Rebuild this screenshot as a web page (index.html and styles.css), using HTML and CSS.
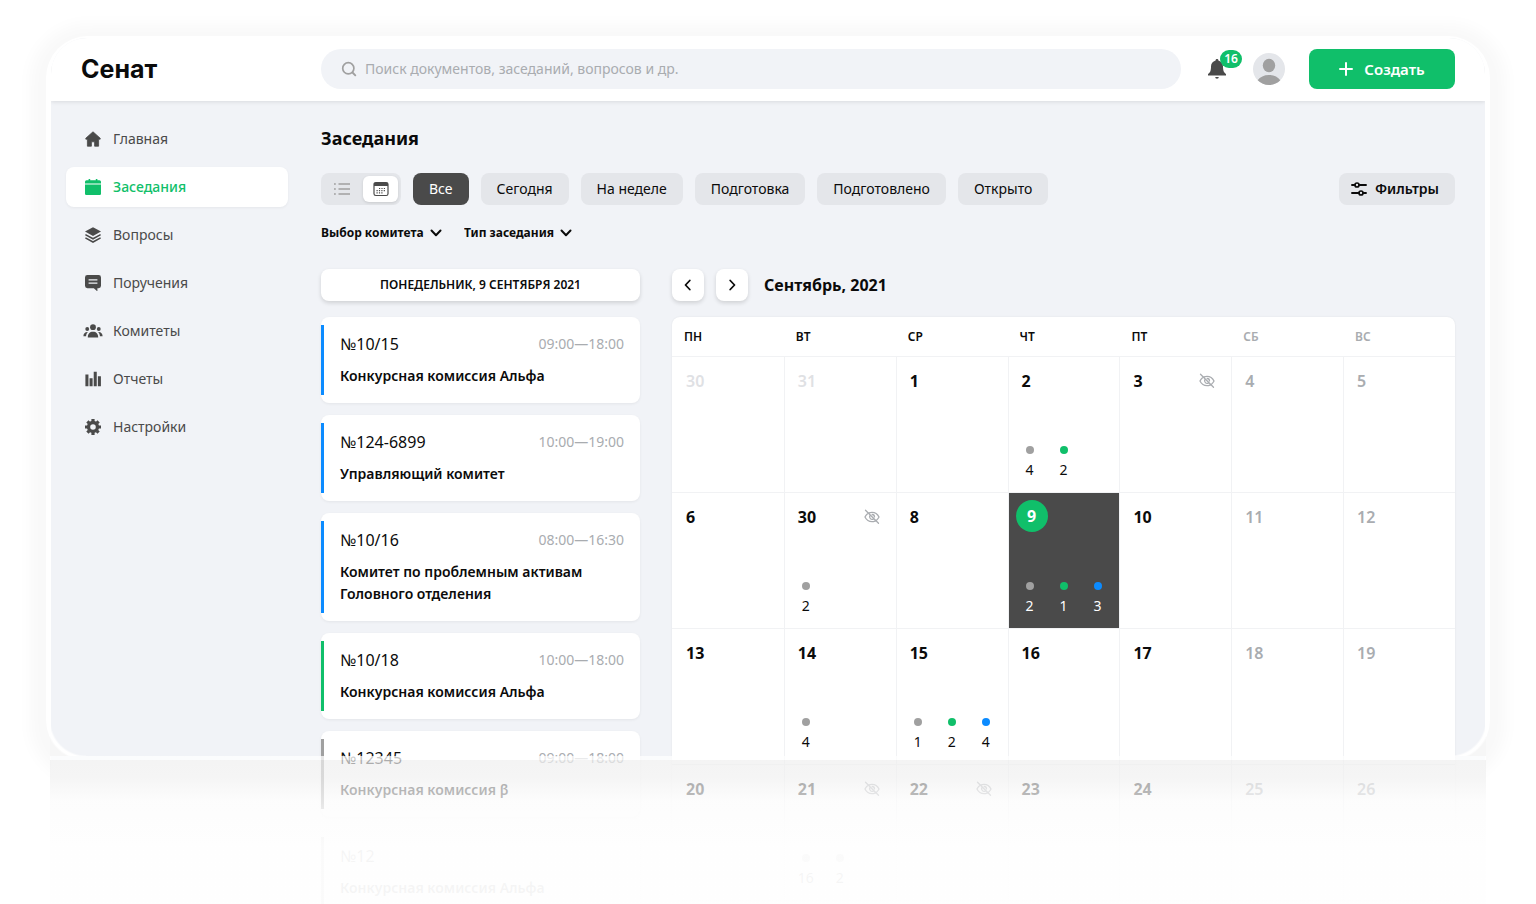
FILE: index.html
```
<!DOCTYPE html>
<html lang="ru">
<head>
<meta charset="utf-8">
<title>Сенат — Заседания</title>
<link rel="stylesheet" href="styles.css">
</head>
<body>
<svg class="sprite" aria-hidden="true">
  <symbol id="eye-off" viewBox="0 0 16 16">
    <path d="M5 3.900A8 8 0 0 1 8 3.300c3.300 0 5.700 2 7 4.700a9 9 0 0 1-2.100 2.800M3.300 4.900A9 9 0 0 0 1 8c1.300 2.700 3.700 4.700 7 4.700 1.100 0 2-.2 2.900-.6M5.900 6.500A2.600 2.600 0 0 0 9.500 10M8.200 5.500a2.500 2.500 0 0 1 2.300 2.400M1.500 1.300l13 13" fill="none" stroke="currentColor" stroke-width="1.300" stroke-linecap="round"/>
  </symbol>
  <symbol id="chevron" viewBox="0 0 12 12">
    <path d="M1.500 3.500 6 8.200l4.500-4.700" fill="none" stroke="currentColor" stroke-width="2" stroke-linecap="round" stroke-linejoin="round"/>
  </symbol>
</svg>
<div class="stage">
  <div class="halo"></div>
  <div class="app">
    <header class="header">
      <a class="logo" href="#">Сенат</a>
      <label class="search">
        <svg viewBox="0 0 16 16"><circle cx="7.300" cy="7.300" r="5.600" fill="none" stroke="currentColor" stroke-width="1.700"/><path d="m11.500 11.500 2.800 2.800" stroke="currentColor" stroke-width="1.900" stroke-linecap="round"/></svg>
        <input type="text" aria-label="Поиск" placeholder="Поиск документов, заседаний, вопросов и др.">
      </label>
      <button class="bell" aria-label="Уведомления">
        <svg viewBox="0 0 20 22"><path d="M10 1c.9 0 1.400.6 1.400 1.400C14.400 3.200 16 5.600 16 8.500c0 4.500 1 6 3 7.500v1.600H1V16c2-1.500 3-3 3-7.500 0-2.900 1.600-5.300 4.600-6.100C8.600 1.600 9.100 1 10 1zM8.200 19h3.600a1.800 1.800 0 0 1-3.600 0z" fill="currentColor"/></svg>
        <span class="badge">16</span>
      </button>
      <button class="avatar" aria-label="Профиль">
        <svg viewBox="0 0 32 32"><circle cx="16" cy="16" r="16" fill="#e4e6ea"/><ellipse cx="16" cy="12.500" rx="6.200" ry="6.800" fill="#a0a0a0"/><path d="M4.700 27.300C7 24 11 22 16 22s9 2 11.300 5.300a16 16 0 0 1-22.600 0z" fill="#a0a0a0"/></svg>
      </button>
      <button class="create">
        <svg viewBox="0 0 14 14"><path d="M7 1v12M1 7h12" stroke="currentColor" stroke-width="2" stroke-linecap="round"/></svg>
        Создать
      </button>
    </header>

    <div class="body">
      <nav class="nav">
        <a href="#"><svg viewBox="0 0 20 20"><path d="M10 1 19 9v1.200h-2V19h-5v-5.500H8V19H3v-8.800H1V9z" fill="currentColor" stroke="currentColor" stroke-linejoin="round"/></svg>Главная</a>
        <a href="#" class="active"><svg viewBox="0 0 20 20"><path d="M4.500 0h2v1.500h7V0h2v1.500H18A2 2 0 0 1 20 3.500v2H0v-2a2 2 0 0 1 2-2h2.500zM0 7h20v11.500a1.500 1.500 0 0 1-1.500 1.500h-17A1.500 1.500 0 0 1 0 18.500z" fill="currentColor"/></svg>Заседания</a>
        <a href="#"><svg viewBox="0 0 20 20"><path d="m10 .2 10 5.500-10 5.500L0 5.700z" fill="currentColor"/><path d="m.5 9.500 9.500 5.200 9.500-5.200M.5 13.600l9.500 5.200 9.500-5.200" fill="none" stroke="currentColor" stroke-width="1.900"/></svg>Вопросы</a>
        <a href="#"><svg viewBox="0 0 20 20"><path fill-rule="evenodd" d="M3 0h14a3 3 0 0 1 3 3v10.500a3 3 0 0 1-3 3h-1.500V20.500L11 16.500H3a3 3 0 0 1-3-3V3a3 3 0 0 1 3-3zm1.500 5.300V7h11V5.300zm0 4V11h11V9.300z" fill="currentColor"/></svg>Поручения</a>
        <a href="#"><svg class="wide" viewBox="0 0 24 20"><g fill="currentColor"><circle cx="12" cy="5.300" r="3.600"/><circle cx="4.800" cy="7.500" r="2.400"/><circle cx="19.200" cy="7.500" r="2.400"/><path d="M5.500 18c0-4.500 2.500-7 6.500-7s6.500 2.500 6.500 7zM0 16.500c0-3.500 2-5.500 5.500-5.300-1.200 1.400-2 3-2.200 5.300zM24 16.500c0-3.500-2-5.500-5.500-5.300 1.200 1.400 2 3 2.200 5.300z"/></g></svg>Комитеты</a>
        <a href="#"><svg viewBox="0 0 20 20"><path d="M.5 4.500h3.800V19H.5zM5.700 9h3.800v10H5.700zM10.900 1h3.800v18h-3.800zM16.100 6.500h3.800V19h-3.800z" fill="currentColor"/></svg>Отчеты</a>
        <a href="#"><svg viewBox="0 0 20 20"><path fill-rule="evenodd" d="M10 2.300a7.700 7.700 0 1 1 0 15.400 7.700 7.700 0 0 1 0-15.400zm0 4.200a3.500 3.500 0 1 0 0 7 3.500 3.500 0 0 0 0-7z" fill="currentColor"/><path d="M10 0v3.500M10 16.500V20M0 10h3.500M16.500 10H20M3 3l2.200 2.200M14.800 14.800 17 17M3 17l2.200-2.200M14.800 5.200 17 3" stroke="currentColor" stroke-width="4"/></svg>Настройки</a>
      </nav>

      <main class="main">
        <h1>Заседания</h1>
        <div class="toolbar">
          <div class="toggle">
            <button aria-label="Список"><svg viewBox="0 0 16 16"><path d="M4.500 3H16M4.500 8H16M4.500 13H16M0 3h1.800M0 8h1.800M0 13h1.800" stroke="currentColor" stroke-width="1.600"/></svg></button>
            <button class="on" aria-label="Календарь"><svg viewBox="0 0 16 16"><rect x="1" y="1.500" width="14" height="13" rx="1.800" fill="none" stroke="currentColor" stroke-width="1.200"/><path d="M1 2h14v3H1z" fill="currentColor"/><path d="M6 7.500h7M3.500 9.700h9.500M3.500 11.900h7" stroke="currentColor" stroke-width="1.200" stroke-dasharray="1.200 1.200"/></svg></button>
          </div>
          <button class="chip dark">Все</button>
          <button class="chip">Сегодня</button>
          <button class="chip">На неделе</button>
          <button class="chip">Подготовка</button>
          <button class="chip">Подготовлено</button>
          <button class="chip">Открыто</button>
          <button class="filters"><svg viewBox="0 0 16 16"><path d="M1 4h3M8 4h7M1 12h7M12 12h3" stroke="currentColor" stroke-width="1.900" stroke-linecap="round"/><circle cx="6" cy="4" r="2" fill="none" stroke="currentColor" stroke-width="1.700"/><circle cx="10" cy="12" r="2" fill="none" stroke="currentColor" stroke-width="1.700"/></svg>Фильтры</button>
        </div>
        <div class="selects">
          <label><select aria-label="Выбор комитета"><option>Выбор комитета</option></select><svg><use href="#chevron"/></svg></label>
          <label><select aria-label="Тип заседания"><option>Тип заседания</option></select><svg><use href="#chevron"/></svg></label>
        </div>

        <div class="columns">
          <section class="agenda">
            <h2 class="date">ПОНЕДЕЛЬНИК, 9 СЕНТЯБРЯ 2021</h2>
            <article class="card blue"><div><span>№10/15</span><time>09:00—18:00</time></div><h3>Конкурсная комиссия Альфа</h3></article>
            <article class="card blue"><div><span>№124-6899</span><time>10:00—19:00</time></div><h3>Управляющий комитет</h3></article>
            <article class="card blue"><div><span>№10/16</span><time>08:00—16:30</time></div><h3>Комитет по проблемным активам Головного отделения</h3></article>
            <article class="card green"><div><span>№10/18</span><time>10:00—18:00</time></div><h3>Конкурсная комиссия Альфа</h3></article>
            <article class="card grey"><div><span>№12345</span><time>09:00—18:00</time></div><h3>Конкурсная комиссия β</h3></article>
            <article class="card grey"><div><span>№12</span></div><h3>Конкурсная комиссия Альфа</h3></article>
          </section>

          <section class="calendar">
            <div class="month">
              <button aria-label="Предыдущий месяц"><svg viewBox="0 0 12 12"><path d="M7.800 1.500 3.500 6l4.300 4.500" fill="none" stroke="currentColor" stroke-width="1.800" stroke-linecap="round" stroke-linejoin="round"/></svg></button>
              <button aria-label="Следующий месяц"><svg viewBox="0 0 12 12"><path d="M4.200 1.500 8.500 6l-4.300 4.500" fill="none" stroke="currentColor" stroke-width="1.800" stroke-linecap="round" stroke-linejoin="round"/></svg></button>
              <h2>Сентябрь, 2021</h2>
            </div>
            <table>
              <thead><tr><th>ПН</th><th>ВТ</th><th>СР</th><th>ЧТ</th><th>ПТ</th><th class="off">СБ</th><th class="off">ВС</th></tr></thead>
              <tbody>
                <tr>
                  <td class="past"><div class="day"><b>30</b></div></td>
                  <td class="past"><div class="day"><b>31</b></div></td>
                  <td><div class="day"><b>1</b></div></td>
                  <td><div class="day"><b>2</b><ul><li>4</li><li class="g">2</li></ul></div></td>
                  <td><div class="day"><b>3</b><svg><use href="#eye-off"/></svg></div></td>
                  <td class="off"><div class="day"><b>4</b></div></td>
                  <td class="off"><div class="day"><b>5</b></div></td>
                </tr>
                <tr>
                  <td><div class="day"><b>6</b></div></td>
                  <td><div class="day"><b>30</b><svg><use href="#eye-off"/></svg><ul><li>2</li></ul></div></td>
                  <td><div class="day"><b>8</b></div></td>
                  <td class="today"><div class="day"><b>9</b><ul><li>2</li><li class="g">1</li><li class="b">3</li></ul></div></td>
                  <td><div class="day"><b>10</b></div></td>
                  <td class="off"><div class="day"><b>11</b></div></td>
                  <td class="off"><div class="day"><b>12</b></div></td>
                </tr>
                <tr>
                  <td><div class="day"><b>13</b></div></td>
                  <td><div class="day"><b>14</b><ul><li>4</li></ul></div></td>
                  <td><div class="day"><b>15</b><ul><li>1</li><li class="g">2</li><li class="b">4</li></ul></div></td>
                  <td><div class="day"><b>16</b></div></td>
                  <td><div class="day"><b>17</b></div></td>
                  <td class="off"><div class="day"><b>18</b></div></td>
                  <td class="off"><div class="day"><b>19</b></div></td>
                </tr>
                <tr>
                  <td><div class="day"><b>20</b></div></td>
                  <td><div class="day"><b>21</b><svg><use href="#eye-off"/></svg><ul><li>16</li><li>2</li></ul></div></td>
                  <td><div class="day"><b>22</b><svg><use href="#eye-off"/></svg></div></td>
                  <td><div class="day"><b>23</b></div></td>
                  <td><div class="day"><b>24</b></div></td>
                  <td class="off"><div class="day"><b>25</b></div></td>
                  <td class="off"><div class="day"><b>26</b></div></td>
                </tr>
              </tbody>
            </table>
          </section>
        </div>
      </main>
    </div>
  </div>
  <div class="veil"></div>
</div>
</body>
</html>
```
FILE: styles.css
```
* { box-sizing: border-box; margin: 0; padding: 0; }
body { background: #fff; color: #0b0b0b; font: 14px/22px "Noto Sans", sans-serif; }
button, input, select { font: inherit; color: inherit; border: 0; background: none; }
a { color: inherit; text-decoration: none; }
ul { list-style: none; }
svg { display: block; flex: none; width: 16px; height: 16px; }
.sprite { position: absolute; width: 0; height: 0; }

.stage { position: relative; height: 100vh; padding: 38px 51px 0; overflow: hidden; }
.halo {
  position: absolute; inset: 38px 48px 144px; border-radius: 40px; background: #fff;
  box-shadow: 0 0 0 2px #fff, 0 4px 16px 18px rgba(0, 0, 0, .028);
}
.app {
  position: relative; height: 100%; overflow: hidden; border-radius: 36px 36px 0 0;
  background: linear-gradient(to top, #fff 144px, #f1f3f7 144px);
}

/* fade below the panel, with rounded lower corners cut into it */
.veil {
  position: absolute; left: 50px; right: 50px; bottom: 0; height: 184px; pointer-events: none;
  background:
    radial-gradient(circle at 100% 0, transparent 35px, #fff 37px, #fff 39px, #f6f6f6 41px) 0 0 / 36px 36px no-repeat,
    radial-gradient(circle at 0 0, transparent 35px, #fff 37px, #fff 39px, #f6f6f6 41px) 100% 0 / 36px 36px no-repeat,
    linear-gradient(rgba(255, 255, 255, .75) 4px, rgba(239, 239, 239, .7) 4px, rgba(241, 241, 241, .7) 22px, rgba(252, 252, 252, .74) 46px, rgba(253, 253, 253, .92) 68px, rgba(254, 254, 254, .96) 90px, rgba(254, 254, 254, .96)) 0 36px / 100% 148px no-repeat;
}

.header {
  position: relative; display: flex; align-items: center; height: 63px; padding: 0 30px 2px;
  background: #fff; box-shadow: 0 1px 4px rgba(0, 0, 0, .1);
}
.logo { width: 240px; font: 700 25px/32px Inter, sans-serif; }
.search { flex: 1; display: flex; align-items: center; gap: 8px; height: 40px; padding: 0 20px; border-radius: 20px; background: #f1f3f7; color: #a0a0a0; }
.search input { flex: 1; outline: 0; }
.search input::placeholder { color: #a9acb0; opacity: 1; }
.bell { position: relative; margin-left: 26px; color: #4a4a4a; }
.bell svg { width: 20px; height: 22px; }
.badge { position: absolute; left: 13px; top: -8px; min-width: 22px; padding: 0 4px; border-radius: 9px; background: #10bf6a; color: #fff; font-size: 12px; line-height: 18px; font-weight: 600; }
.avatar { margin: 0 24px 0 26px; }
.avatar svg { width: 32px; height: 32px; }
.create { display: flex; align-items: center; justify-content: center; gap: 11px; width: 146px; height: 40px; border-radius: 8px; background: #10bf6a; color: #fff; font-size: 15px; font-weight: 600; }
.create svg { width: 14px; height: 14px; }

.body { display: flex; padding-right: 30px; }
.nav { display: flex; flex-direction: column; gap: 8px; width: 270px; padding: 18px 33px 0 15px; }
.nav a { display: flex; align-items: center; gap: 12px; height: 40px; padding: 0 19px; border-radius: 8px; color: #4a4a4a; }
.nav .wide { width: 20px; margin: 0 -2px; }
.nav .active { background: #fff; color: #10bf6a; font-weight: 500; box-shadow: 0 1px 3px rgba(0, 0, 0, .05); }

.main { flex: 1; min-width: 0; padding-top: 23px; }
h1 { font-size: 18px; line-height: 28px; font-weight: 700; }
.toolbar { display: flex; gap: 12px; margin-top: 21px; }
.toggle { display: flex; gap: 4px; width: 80px; height: 32px; padding: 3px; border-radius: 8px; background: #e4e6ea; }
.toggle button { display: grid; place-items: center; flex: 1; border-radius: 6px; color: #a0a0a0; }
.toggle .on { background: #fff; color: #4a4a4a; box-shadow: 0 1px 3px rgba(0, 0, 0, .12); }
.chip, .filters { height: 32px; padding: 0 16px; border-radius: 8px; background: #e4e6ea; white-space: nowrap; }
.dark { background: #4a4a4a; color: #fff; }
.filters { display: flex; align-items: center; gap: 8px; margin-left: auto; padding: 0 16px 0 12px; font-weight: 600; }
.selects { display: flex; gap: 22px; margin-top: 17px; font-size: 12px; font-weight: 700; }
.selects label { display: flex; align-items: center; gap: 6px; }
.selects select { appearance: none; }
.selects svg { width: 12px; height: 12px; }

.columns { display: flex; gap: 32px; margin-top: 25px; }
.agenda { display: flex; flex-direction: column; gap: 12px; width: 319px; }
.date { height: 32px; margin-bottom: 4px; border-radius: 8px; background: #fff; box-shadow: 0 2px 4px rgba(0, 0, 0, .14); text-align: center; font-size: 12px; line-height: 32px; font-weight: 600; }
.card { padding: 16px 16px 16px 19px; border-radius: 8px; background: linear-gradient(var(--mark), var(--mark)) 0 50% / 3px calc(100% - 16px) no-repeat #fff; box-shadow: 0 1px 3px rgba(0, 0, 0, .06); }
.card div { display: flex; justify-content: space-between; margin-bottom: 10px; font-size: 16px; }
.card time { font-size: 14px; color: #a9acb0; }
.card h3 { font-size: 14px; font-weight: 600; }
.blue { --mark: #0b8bff; }
.green { --mark: #10bf6a; }
.grey { --mark: #a0a0a0; }

.calendar { flex: 1; min-width: 0; }
.month { display: flex; align-items: center; gap: 12px; margin-bottom: 16px; }
.month button { display: grid; place-items: center; width: 32px; height: 32px; border-radius: 8px; background: #fff; box-shadow: 0 2px 4px rgba(0, 0, 0, .14); }
.month svg { width: 12px; height: 12px; }
.month h2 { margin-left: 4px; font-size: 16px; font-weight: 700; }
table { width: 100%; table-layout: fixed; border-spacing: 0; border-radius: 8px; background: #fff; box-shadow: 0 0 2px rgba(0, 0, 0, .08); }
th { height: 39px; padding-left: 12px; text-align: left; font-size: 12px; font-weight: 600; }
td { border-top: 1px solid #f1f2f4; }
td + td { border-left: 1px solid #f1f2f4; }
.off { color: #a9acb0; }
.past { color: #dfe1e4; }
.day { display: grid; grid-template: 1fr auto / 1fr auto; min-height: 135px; padding: 13px 16px 12px 13px; }
td:first-child .day { padding-left: 14px; }
.day b { font-size: 16px; font-weight: 700; }
.off b, .past b { font-weight: 600; }
.day svg { margin-top: 3px; color: #a9acb0; }
.day ul { grid-column: 1 / -1; grid-row: 2; display: flex; margin: 0 -9px; }
.day li { flex: none; width: 34px; text-align: center; line-height: 20px; }
.day li::before { content: ""; display: block; width: 8px; height: 8px; margin: 0 auto 6px; border-radius: 50%; background: #a0a0a0; }
.day .g::before { background: #10bf6a; }
.day .b::before { background: #0b8bff; }
.today { background: #4a4a4a; color: #fff; }
.today b { justify-self: start; width: 32px; height: 32px; margin: -6px 0 0 -6px; border-radius: 50%; background: #10bf6a; line-height: 32px; text-align: center; }
```
